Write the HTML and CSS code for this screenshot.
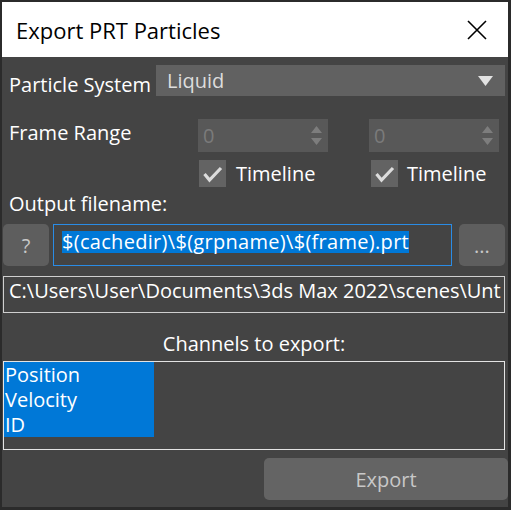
FILE: index.html
```html
<!DOCTYPE html>
<html lang="en">
<head>
  <meta charset="UTF-8">
  <title>Export PRT Particles</title>
  <link rel="stylesheet" href="styles.css">
</head>
<body>
  <div class="window">
    <!-- title bar -->
    <div class="titlebar">
      <span class="title">Export PRT Particles</span>
      <svg class="close" width="20" height="20" viewBox="0 0 20 20">
        <path d="M1 1 L19 19 M19 1 L1 19" stroke="#000" stroke-width="1.6" fill="none"/>
      </svg>
    </div>

    <div class="content">
      <div class="system-row">
        <div class="label system-label">Particle System</div>
        <div class="dropdown">
          <span>Liquid</span>
          <svg width="15" height="10" viewBox="0 0 15 10"><path d="M0 0 H15 L7.5 10 Z" fill="#e2e2e2"/></svg>
        </div>
      </div>

      <div class="range">
        <div class="label">Frame Range</div>
        <div class="spinner">
          <span>0</span>
          <svg width="11" height="19" viewBox="0 0 11 19"><path d="M0 7 L5.5 0 L11 7 Z M0 12 H11 L5.5 19 Z" fill="#7d7d7d"/></svg>
        </div>
        <div></div>
        <div class="spinner">
          <span>0</span>
          <svg width="11" height="19" viewBox="0 0 11 19"><path d="M0 7 L5.5 0 L11 7 Z M0 12 H11 L5.5 19 Z" fill="#7d7d7d"/></svg>
        </div>
        <div></div>
        <div class="check">
          <span class="box"><svg width="27" height="27" viewBox="0 0 27 27"><polyline points="5.5,14 10.5,20 22,8" stroke="#dcdcdc" stroke-width="3.2" fill="none"/></svg></span>
          <span>Timeline</span>
        </div>
        <div></div>
        <div class="check check-right">
          <span class="box"><svg width="27" height="27" viewBox="0 0 27 27"><polyline points="5.5,14 10.5,20 22,8" stroke="#dcdcdc" stroke-width="3.2" fill="none"/></svg></span>
          <span>Timeline</span>
        </div>
      </div>

      <div class="label out-label">Output filename:</div>
      <div class="file-row">
        <button class="btn small">?</button>
        <div class="file-input"><span class="sel">$(cachedir)\$(grpname)\$(frame).prt</span></div>
        <button class="btn small">...</button>
      </div>

      <div class="path">C:\Users\User\Documents\3ds Max 2022\scenes\Unt</div>

      <div class="label channels-label">Channels to export:</div>
      <div class="listbox">
        <div class="item">Position</div>
        <div class="item">Velocity</div>
        <div class="item">ID</div>
      </div>

      <div class="footer">
        <button class="btn export">Export</button>
      </div>
    </div>
  </div>
</body>
</html>
```

FILE: styles.css
```css
body {
  margin: 0;
  padding: 2px 0 0 2px;
  background-color: #2b2b2b;
  font-family: 'Open Sans', 'Noto Sans', sans-serif;
  font-size: 20px;
  color: #fff;
}

.window {
  width: 506px;
  height: 505px;
  background-color: #444;
  display: flex;
  flex-direction: column;
}

.titlebar {
  height: 55px;
  background-color: #fff;
  color: #000;
  display: flex;
  align-items: center;
  justify-content: space-between;
  padding: 0 21px 0 14px;
  font-size: 22px;
  flex-shrink: 0;
}

.content {
  padding: 0 3px 0 1px;
  display: flex;
  flex-direction: column;
}

.label {
  line-height: 27px;
  padding-left: 6px;
}

.system-row {
  display: flex;
  margin-top: 8px;
}

.system-label {
  width: 153px;
  box-sizing: border-box;
  padding-top: 6px;
}

.dropdown {
  flex: 1;
  height: 31px;
  background-color: #616161;
  color: #ddd;
  display: flex;
  align-items: center;
  justify-content: space-between;
  padding: 0 12px 0 11px;
  line-height: 27px;
}

.range {
  display: grid;
  grid-template-columns: 195px 130px 41px 130px;
  grid-template-rows: 33px 27px;
  row-gap: 8px;
  margin-top: 21px;
}

.spinner {
  background-color: #585858;
  color: #7b7b7b;
  display: flex;
  align-items: center;
  justify-content: space-between;
  padding: 0 6px 0 5px;
  line-height: 27px;
}

.check {
  display: flex;
  align-items: center;
  gap: 10px;
  padding-left: 1px;
  line-height: 27px;
}

.check-right {
  padding-left: 2px;
  gap: 9px;
}

.check .box {
  width: 27px;
  height: 27px;
  background-color: #636363;
  display: block;
}

.check .box svg {
  display: block;
}

.out-label {
  margin-top: 3px;
}

.file-row {
  display: flex;
  height: 42px;
  margin-top: 7px;
}

.btn {
  border: none;
  background-color: #5e5e5e;
  color: #c8c8c8;
  font-family: inherit;
  font-size: 20px;
  border-radius: 5px;
  padding: 0;
}

.btn.small {
  width: 46px;
}

.file-input {
  flex: 1;
  margin: 0 7px 0 4px;
  border: 1px solid #2a8ce6;
  padding: 3px 8px;
}

.sel {
  display: inline-block;
  height: 22px;
  line-height: 22px;
  background-color: #0078d7;
  color: #fff;
  white-space: nowrap;
  letter-spacing: 0.3px;
}

.path {
  margin-top: 10px;
  height: 37px;
  box-sizing: border-box;
  border: 1px solid #cfcfcf;
  padding: 0 5px;
  line-height: 27px;
  white-space: nowrap;
  overflow: hidden;
}

.channels-label {
  margin-top: 17px;
  text-align: center;
  padding-left: 0;
}

.listbox {
  margin-top: 4px;
  height: 89px;
  box-sizing: border-box;
  border: 1px solid #e4e4e4;
}

.item {
  width: 150px;
  box-sizing: border-box;
  padding-left: 1px;
  line-height: 25px;
  background-color: #0078d7;
}

.footer {
  display: flex;
  justify-content: flex-end;
  margin-top: 8px;
  margin-right: -3px;
}

.btn.export {
  width: 244px;
  height: 42px;
  background-color: #646464;
}
```
